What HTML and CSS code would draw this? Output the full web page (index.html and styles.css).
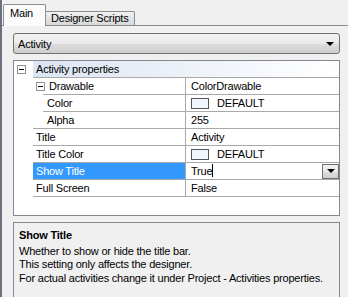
FILE: index.html
```html
<!DOCTYPE html>
<html lang="en">
<head>
  <meta charset="UTF-8" />
  <title>Activity properties</title>
  <link rel="stylesheet" href="styles.css">
</head>
<body>
  <div class="window">
    <div class="tabs">
      <div class="tab active">Main</div>
      <div class="tab">Designer Scripts</div>
    </div>
    <div class="page">
      <div class="combo">
        <span>Activity</span>
        <span class="arrow"></span>
      </div>

      <div class="grid">
        <div class="row cat">
          <span class="exp cat-exp"></span>
          <div class="name">Activity properties</div>
        </div>
        <div class="row lvl1">
          <div class="name"><span class="exp"></span>Drawable</div>
          <div class="value">ColorDrawable</div>
        </div>
        <div class="row lvl2">
          <div class="name">Color</div>
          <div class="value"><span class="swatch"></span>DEFAULT</div>
        </div>
        <div class="row lvl2">
          <div class="name">Alpha</div>
          <div class="value">255</div>
        </div>
        <div class="row lvl1">
          <div class="name">Title</div>
          <div class="value">Activity</div>
        </div>
        <div class="row lvl1">
          <div class="name">Title Color</div>
          <div class="value"><span class="swatch"></span>DEFAULT</div>
        </div>
        <div class="row lvl1 selected">
          <div class="name">Show Title</div>
          <div class="value edit">
            <span>True<span class="caret"></span></span>
            <span class="drop"><span class="arrow"></span></span>
          </div>
        </div>
        <div class="row lvl1 last">
          <div class="name">Full Screen</div>
          <div class="value">False</div>
        </div>
      </div>

      <div class="help">
        <div class="help-title">Show Title</div>
        <div>Whether to show or hide the title bar.</div>
        <div>This setting only affects the designer.</div>
        <div>For actual activities change it under Project - Activities properties.</div>
      </div>
    </div>
  </div>
</body>
</html>
```

FILE: styles.css
```css
* { box-sizing: border-box; }
body {
  margin: 0;
  background: #f0f0f0;
  font-family: "Liberation Sans", Arial, sans-serif;
  font-size: 11px;
  letter-spacing: -0.2px;
  color: #000;
}

.window {
  height: 297px;
  border-left: 2px solid #6b717c;
  overflow: hidden;
}

.tabs {
  display: flex;
  align-items: flex-end;
  height: 25px;
  padding-left: 1px;
}

.tab {
  height: 14px;
  padding: 0 5px;
  line-height: 13px;
  border: 1px solid #898c95;
  border-bottom: none;
  border-radius: 2px 2px 0 0;
  background: linear-gradient(#f2f2f2, #e3e3e3 50%, #d9d9d9);
  margin-left: -1px;
}

.tab.active {
  width: 43px;
  height: 22px;
  padding: 2px 0 0 6px;
  background: #fcfcfc;
  position: relative;
  z-index: 1;
  margin-bottom: -1px;
  margin-left: 0;
}

.page {
  border-top: 1px solid #898c95;
  padding: 7px 8px 0 11px;
}

.combo {
  height: 21px;
  border: 1px solid #707070;
  border-radius: 3px;
  background: linear-gradient(#f2f2f2, #ebebeb 50%, #dddddd 51%, #cfcfcf);
  display: flex;
  align-items: center;
  justify-content: space-between;
  padding: 0 5px 0 4px;
}

.arrow {
  width: 0;
  height: 0;
  border-left: 4px solid transparent;
  border-right: 4px solid transparent;
  border-top: 4px solid #000;
}

.grid {
  margin-top: 6px;
  height: 156px;
  border: 1px solid #828790;
  background: #fff;
  position: relative;
}

.row {
  display: flex;
  height: 17px;
  line-height: 16px;
  border-top: 1px solid #a9a9a9;
}

.row.cat {
  margin-left: 19px;
  height: 16px;
  border-top: none;
  padding-top: 2px;
  line-height: 13px;
  background: linear-gradient(90deg, #dbe5f3, #fff);
}

.row.lvl1 { margin-left: 19px; }
.row.lvl2 { margin-left: 29px; }
.row.last { border-bottom: 1px solid #a9a9a9; height: 18px; }

.name {
  padding-left: 3px;
  white-space: nowrap;
  border-right: 1px solid #a9a9a9;
  display: flex;
  align-items: center;
}
.row.lvl1 .name { width: 153px; }
.row.lvl2 .name { width: 143px; padding-left: 4px; }
.row.cat .name { border-right: none; align-items: flex-start; }

.value {
  flex: 1;
  padding-left: 5px;
  display: flex;
  align-items: center;
}

.exp {
  width: 9px;
  height: 9px;
  border: 1px solid #919191;
  background: #fff;
  position: relative;
  margin-right: 4px;
  flex: none;
}
.exp::after {
  content: "";
  position: absolute;
  left: 1px;
  top: 3px;
  width: 5px;
  height: 1px;
  background: #000;
}
.cat-exp {
  position: absolute;
  left: 3px;
  top: 4px;
}

.swatch {
  width: 18px;
  height: 11px;
  border: 1px solid #555;
  background: #f0f6fd;
  margin-right: 8px;
}

.selected .name {
  background: #3399ff;
  color: #fff;
}

.value.edit {
  justify-content: space-between;
}

.caret {
  display: inline-block;
  width: 1px;
  height: 13px;
  background: #000;
  vertical-align: -2px;
}

.drop {
  width: 17px;
  height: 15px;
  border: 1px solid #707070;
  background: linear-gradient(#f2f2f2, #ebebeb 50%, #dddddd 51%, #cfcfcf);
  display: flex;
  align-items: center;
  justify-content: center;
}

.help {
  margin-top: 6px;
  height: 80px;
  border: 1px solid #828790;
  padding: 6px 5px;
  line-height: 13.5px;
  white-space: nowrap;
}

.help-title {
  font-weight: bold;
  margin-bottom: 2px;
}
```
